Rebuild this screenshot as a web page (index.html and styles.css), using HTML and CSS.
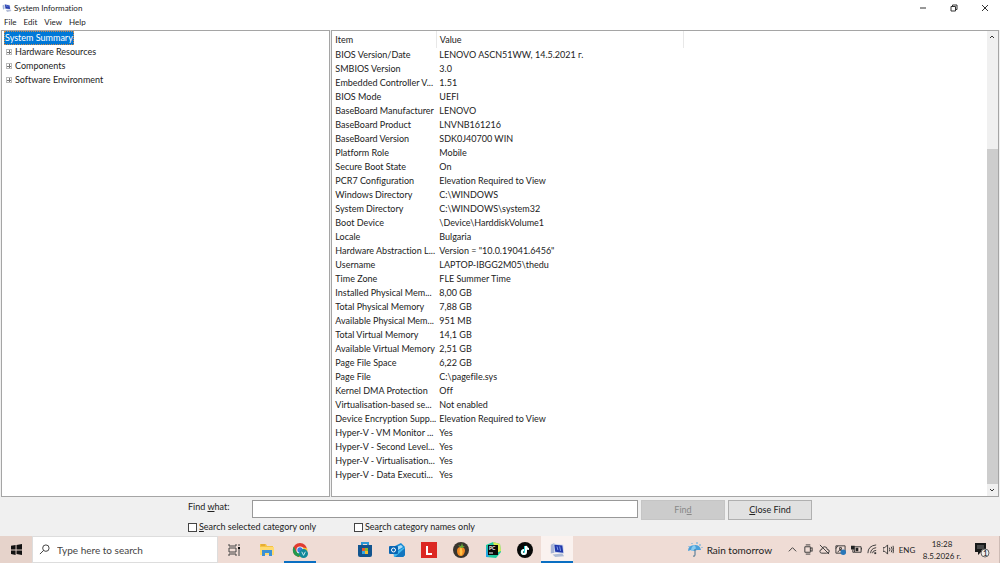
FILE: index.html
```html
<!DOCTYPE html>
<html lang="en">
<head>
  <meta charset="UTF-8">
  <meta name="viewport" content="width=device-width, initial-scale=1">
  <title>System Information</title>
  <link rel="stylesheet" href="styles.css">
</head>
<body>
  <header class="titlebar">
    <svg class="app-icon" viewBox="0 0 20 20" aria-hidden="true">
      <path d="M1 5l4-2v9l-3 1z" fill="#9fb3d6"/>
      <path d="M5 2l11 2 1 9-11-1z" fill="#d5dcef"/>
      <path d="M6 3l9 2 1 7-9-1z" fill="#2036a8"/>
      <path d="M8 14l9-1 2 3-9 2z" fill="#b3bdd8"/>
      <path d="M9 4l1 4M12 5v4" stroke="#8fb0ff"/>
    </svg>
    <h1>System Information</h1>
    <div class="window-buttons">
      <button type="button" aria-label="Minimize"><svg viewBox="0 0 10 10"><path d="M2 5h6"/></svg></button>
      <button type="button" aria-label="Restore"><svg viewBox="0 0 10 10"><path d="M2 3.500h4.500v4.500h-4.500zM3.500 3.500v-1.500h4.500v4.500h-1.500"/></svg></button>
      <button type="button" aria-label="Close"><svg viewBox="0 0 10 10"><path d="M2 2l6 6M8 2l-6 6"/></svg></button>
    </div>
  </header>

  <nav class="menubar">
    <button type="button">File</button>
    <button type="button">Edit</button>
    <button type="button">View</button>
    <button type="button">Help</button>
  </nav>

  <main class="panes">
    <section class="tree-pane">
      <ul class="tree">
        <li><a href="#summary" class="selected">System Summary</a></li>
        <li class="branch"><button type="button" class="expander" aria-label="Expand Hardware Resources"></button><a href="#hardware">Hardware Resources</a></li>
        <li class="branch"><button type="button" class="expander" aria-label="Expand Components"></button><a href="#components">Components</a></li>
        <li class="branch"><button type="button" class="expander" aria-label="Expand Software Environment"></button><a href="#software">Software Environment</a></li>
      </ul>
    </section>

    <section class="detail-pane" id="summary">
      <div class="table-area">
        <table class="details">
          <thead>
            <tr><th class="col-item">Item</th><th class="col-value">Value</th><th class="col-rest"></th></tr>
          </thead>
          <tbody>
            <tr><td>BIOS Version/Date</td><td>LENOVO ASCN51WW, 14.5.2021 г.</td></tr>
            <tr><td>SMBIOS Version</td><td>3.0</td></tr>
            <tr><td>Embedded Controller V...</td><td>1.51</td></tr>
            <tr><td>BIOS Mode</td><td>UEFI</td></tr>
            <tr><td>BaseBoard Manufacturer</td><td>LENOVO</td></tr>
            <tr><td>BaseBoard Product</td><td>LNVNB161216</td></tr>
            <tr><td>BaseBoard Version</td><td>SDK0J40700 WIN</td></tr>
            <tr><td>Platform Role</td><td>Mobile</td></tr>
            <tr><td>Secure Boot State</td><td>On</td></tr>
            <tr><td>PCR7 Configuration</td><td>Elevation Required to View</td></tr>
            <tr><td>Windows Directory</td><td>C:\WINDOWS</td></tr>
            <tr><td>System Directory</td><td>C:\WINDOWS\system32</td></tr>
            <tr><td>Boot Device</td><td>\Device\HarddiskVolume1</td></tr>
            <tr><td>Locale</td><td>Bulgaria</td></tr>
            <tr><td>Hardware Abstraction L...</td><td>Version = "10.0.19041.6456"</td></tr>
            <tr><td>Username</td><td>LAPTOP-IBGG2M05\thedu</td></tr>
            <tr><td>Time Zone</td><td>FLE Summer Time</td></tr>
            <tr><td>Installed Physical Mem...</td><td>8,00 GB</td></tr>
            <tr><td>Total Physical Memory</td><td>7,88 GB</td></tr>
            <tr><td>Available Physical Mem...</td><td>951 MB</td></tr>
            <tr><td>Total Virtual Memory</td><td>14,1 GB</td></tr>
            <tr><td>Available Virtual Memory</td><td>2,51 GB</td></tr>
            <tr><td>Page File Space</td><td>6,22 GB</td></tr>
            <tr><td>Page File</td><td>C:\pagefile.sys</td></tr>
            <tr><td>Kernel DMA Protection</td><td>Off</td></tr>
            <tr><td>Virtualisation-based se...</td><td>Not enabled</td></tr>
            <tr><td>Device Encryption Supp...</td><td>Elevation Required to View</td></tr>
            <tr><td>Hyper-V - VM Monitor ...</td><td>Yes</td></tr>
            <tr><td>Hyper-V - Second Level...</td><td>Yes</td></tr>
            <tr><td>Hyper-V - Virtualisation...</td><td>Yes</td></tr>
            <tr><td>Hyper-V - Data Executi...</td><td>Yes</td></tr>
          </tbody>
        </table>
      </div>
      <div class="scrollbar">
        <button type="button" aria-label="Scroll up"><svg viewBox="0 0 10 10"><path d="M3 6l2-2 2 2"/></svg></button>
        <div class="track"><div class="thumb"></div></div>
        <button type="button" aria-label="Scroll down"><svg viewBox="0 0 10 10"><path d="M3 4l2 2 2-2"/></svg></button>
      </div>
    </section>
  </main>

  <form class="findbar">
    <div class="find-row">
      <label for="find">Find <u>w</u>hat:</label>
      <input type="text" id="find">
      <button type="button" disabled>Fin<u>d</u></button>
      <button type="button"><u>C</u>lose Find</button>
    </div>
    <div class="check-row">
      <label><input type="checkbox"><span><u>S</u>earch selected category only</span></label>
      <label><input type="checkbox"><span>Sea<u>r</u>ch category names only</span></label>
    </div>
  </form>

  <footer class="taskbar">
    <button type="button" class="start" aria-label="Start">
      <svg viewBox="0 0 12 12"><path d="M0 2l5-1v5H0zM6 1l6-1v6H6zM0 7h5v5l-5-1zM6 7h6v5l-6-1z" fill="#111"/></svg>
    </button>
    <label class="search">
      <svg viewBox="0 0 12 12"><circle cx="7.500" cy="4.500" r="3.500"/><path d="M5 7l-4 4"/></svg>
      <input type="text" placeholder="Type here to search" aria-label="Type here to search">
    </label>

    <div class="apps pinned">
      <button type="button" aria-label="Task view">
        <svg viewBox="0 0 16 16" fill="none" stroke="#444"><path d="M3 2v2h7v-2M3 14v-2h7v2M3 6h7v4H3zM13 2v2M13 7v7"/><path d="M12 6h2" stroke="#111" stroke-width="2"/></svg>
      </button>
      <button type="button" aria-label="File Explorer">
        <svg viewBox="0 0 16 16"><path d="M1 2h6l1 2h6v9H1z" fill="#f5c343"/><path d="M1 5h14v8H1z" fill="#ffda70"/><path d="M3 8h10v6h-3v-3H6v3H3z" fill="#3c91d4"/><path d="M2 3h4" stroke="#d6962a"/></svg>
      </button>
      <button type="button" class="running" aria-label="Google Chrome">
        <svg viewBox="0 0 18 18"><circle cx="9" cy="9" r="8" fill="#e13b30"/><path d="M2 5a8 8 0 0 0 6 12l4-7-7 1z" fill="#23994e"/><path d="M17 7a8 8 0 0 1-9 10l5-8-2-3z" fill="#f5c530"/><circle cx="9" cy="9" r="4" fill="#fff"/><circle cx="9" cy="9" r="3" fill="#3b7de0"/><circle cx="13" cy="13" r="5" fill="#10899a"/><path d="M11 11l2 4 2-4" fill="none" stroke="#d7f3f5"/></svg>
      </button>
    </div>

    <div class="apps">
      <button type="button" aria-label="Microsoft Store">
        <svg viewBox="0 0 16 16"><path d="M5 4V1h6v3" fill="none" stroke="#2f9ad6" stroke-width="2"/><path d="M1 3h14v10q0 2-2 2H3q-2 0-2-2z" fill="#12558f"/><path d="M5 6h3v3H5z" fill="#e95c32"/><path d="M8 6h3v3H8z" fill="#86bd35"/><path d="M5 9h3v3H5z" fill="#35a7df"/><path d="M8 9h3v3H8z" fill="#f5bd2c"/></svg>
      </button>
      <button type="button" aria-label="Outlook">
        <svg viewBox="0 0 16 16"><path d="M4 5l8-4 4 4v8l-2 2H5z" fill="#1689d3"/><path d="M7 5l5-2 2 2-5 3z" fill="#a8dcf8"/><path d="M5 9l4 0 7-4v8l-2 2H5z" fill="#42b7ec"/><path d="M16 6L6 15h8l2-2z" fill="#1476bf"/><rect y="4" width="9" height="8" rx="1" fill="#0865b3"/><circle cx="4.500" cy="8" r="2" fill="none" stroke="#fff"/></svg>
      </button>
      <button type="button" aria-label="L">
        <svg viewBox="0 0 16 16"><path d="M0 0h16v16H0z" fill="#dc2823"/><path d="M6 4v8h5" fill="none" stroke="#fff" stroke-width="2"/></svg>
      </button>
      <button type="button" aria-label="FL Studio">
        <svg viewBox="0 0 16 16"><circle cx="8" cy="8" r="8" fill="#39352f"/><path d="M8 5q4 0 4 4-1 5-4 5-4 0-4-5 0-4 4-4z" fill="#f28a22"/><path d="M8 5q-3 4 0 9 3-4 0-9z" fill="#ffc347"/><path d="M8 6L5 3l3 1 1-3 1 3 2 0-3 2z" fill="#65a839"/></svg>
      </button>
      <button type="button" aria-label="PyCharm">
        <svg viewBox="0 0 16 16"><path d="M1 3l7-3 7 2 1 8-5 6-10-1z" fill="#20c9a0"/><path d="M8 0l7 2 1 7-5 2z" fill="#d9ed50"/><path d="M1 4l3 11-3 0z" fill="#21a7e4"/><path d="M3 3h10v10H3z" fill="#090909"/><text x="4" y="8" class="logo-text">PC</text><path d="M4 11h4" stroke="#fff"/></svg>
      </button>
      <button type="button" aria-label="TikTok">
        <svg viewBox="0 0 16 16"><circle cx="8" cy="8" r="8" fill="#080808"/><g fill="none" stroke-width="2"><path d="M8 4v6q0 2-2 2-2-1-1-3l2-1M8 4q1 3 3 3" stroke="#25dfe3"/><path d="M9 4v6q0 2-2 2-2 0-2-2 0-2 2-2M9 4q1 3 3 3" stroke="#fff"/></g></svg>
      </button>
      <button type="button" class="running active" aria-label="System Information">
        <svg viewBox="0 0 18 18"><path d="M2 3l4-2v11l-4 1z" fill="#a8b4d4"/><path d="M5 2l11 1 1 10-11-1z" fill="#cbd5ed"/><path d="M6 3l9 1 1 8-9-1z" fill="#2138aa"/><path d="M9 5l1 4M12 5l1 5" stroke="#87a8f3"/><path d="M4 14l11-1 2 3-10 1z" fill="#aebbd5"/></svg>
      </button>
    </div>

    <div class="tray">
      <button type="button" class="weather">
        <svg viewBox="0 0 16 16"><path d="M1 9Q1 3 8 3q5 0 6 5l-4 0-3 1-3-1z" fill="#4a9fda"/><path d="M7 3Q4 5 4 9l4-1q2-3-1-5z" fill="#8acbf0"/><path d="M8 7v6q0 2-2 1" fill="none" stroke="#47718f"/><path d="M5 1v1M10 0v2M13 2v2M15 5v1M2 4v1" stroke="#5ca9de"/></svg>
        <span>Rain tomorrow</span>
      </button>
      <div class="tray-icons">
        <button type="button" aria-label="Show hidden icons"><svg viewBox="0 0 12 12"><path d="M2 8l4-4 4 4"/></svg></button>
        <button type="button" aria-label="Meet Now"><svg viewBox="0 0 12 12"><path d="M3 1h5M2 3h6v6H2zM8 5l2-1v4L8 7M3 11h5"/></svg></button>
        <button type="button" aria-label="OneDrive"><svg viewBox="0 0 12 12"><path d="M3 10Q1 10 1 8t2-2q0-3 3-3t3 3q3 0 2 3-1 1-3 1zM1 1l10 10"/></svg></button>
        <button type="button" aria-label="Security"><svg viewBox="0 0 12 12"><path d="M1 2h10v8H1zM1 5l2-3M5 4h2v2H5zM3 9q2-4 5-1"/><circle cx="9" cy="9" r="3" fill="#2977b9" stroke="none"/></svg></button>
        <button type="button" aria-label="Battery"><svg viewBox="0 0 12 12"><path d="M3 3h8v6H4zM11 5h1v2"/><path d="M0 2h4v4H0zM5 4h3v4H5z" fill="#222" stroke="none"/><path d="M2 6v3h2"/></svg></button>
        <button type="button" aria-label="Network"><svg viewBox="0 0 12 12"><path d="M1 10Q1 2 10 1M4 10q0-5 6-6M6 10q0-3 4-3"/><path d="M8 9h2v2H8z" fill="#333" stroke="none"/></svg></button>
        <button type="button" aria-label="Volume"><svg viewBox="0 0 12 12"><path d="M0 4h2l3-3v10L2 8H0zM7 4q1 2 0 4M9 3q2 3 0 6M11 2q1 4 0 8"/></svg></button>
      </div>
      <button type="button" class="language">ENG</button>
      <button type="button" class="clock"><span>18:28</span><span>8.5.2026 г.</span></button>
      <button type="button" class="notifications" aria-label="1 new notification">
        <svg viewBox="0 0 16 16"><path d="M1 1h11v9H7l-3 3v-3H1z" fill="#181818"/><path d="M3 4h7M3 6h7" stroke="#777"/><circle cx="11" cy="11" r="4" fill="#eee" stroke="#666"/><text x="9" y="14" class="badge-text">1</text></svg>
      </button>
    </div>
  </footer>
</body>
</html>
```

FILE: styles.css
```css
* {
  box-sizing: border-box;
}

body {
  margin: 0;
  height: 100vh;
  display: flex;
  flex-direction: column;
  background: #f0f0f0;
  color: #222;
  font-family: Lato, "Noto Sans", sans-serif;
  font-size: 9px;
  font-variant-ligatures: none;
  line-height: 14px;
  overflow: hidden;
}

button, input {
  font: inherit;
  color: inherit;
}

button {
  padding: 0;
  border: 0;
  background: none;
}

a {
  color: inherit;
  text-decoration: none;
}

svg {
  display: block;
  flex: none;
}

/* Title and menu */
.titlebar {
  display: flex;
  align-items: center;
  height: 15px;
  padding-left: 2px;
  background: #fff;
}

.app-icon {
  width: 10px;
  height: 10px;
}

.titlebar h1 {
  flex: 1;
  margin: 0 0 0 2px;
  font-size: 8px;
  font-weight: 400;
}

.window-buttons {
  display: flex;
}

.window-buttons button {
  display: grid;
  place-items: center;
  width: 31px;
}

.window-buttons svg {
  width: 10px;
  height: 10px;
}

.window-buttons path, .scrollbar path {
  fill: none;
  stroke: #333;
}

.menubar {
  display: flex;
  align-items: flex-start;
  gap: 7px;
  height: 15px;
  padding-left: 4px;
  background: #fff;
  font-size: 8px;
}

/* Tree on the left, details on the right */
.panes {
  flex: 1;
  min-height: 0;
  display: grid;
  grid-template-columns: 33% 1fr;
  gap: 1px;
  padding: 0 1px;
}

.tree-pane, .detail-pane {
  border: 1px solid #a5a5a5;
  background: #fff;
  overflow: hidden;
}

.tree {
  margin: 0;
  padding: 0 2px;
  list-style: none;
}

.tree li {
  display: flex;
  align-items: center;
  height: 14px;
}

.tree .selected {
  padding: 0 1px;
  background: #0078d7;
  color: #fff;
  outline: 1px dotted #d08a4a;
  outline-offset: -1px;
}

.branch {
  padding-left: 2px;
  gap: 3px;
}

.expander {
  width: 6px;
  height: 6px;
  border: 1px solid #bbb;
  background: linear-gradient(#777, #777) center / 4px 1px no-repeat,
    linear-gradient(#777, #777) center / 1px 4px no-repeat;
}

.detail-pane {
  display: flex;
}

.table-area {
  flex: 1;
  min-width: 0;
}

.details {
  width: 100%;
  table-layout: fixed;
  border-collapse: collapse;
}

.details th, .details td {
  height: 14px;
  padding: 0 0 0 3px;
  font-weight: 400;
  text-align: left;
  white-space: nowrap;
}

.details th {
  height: 17px;
  border-right: 1px solid #e8e8e8;
}

.details .col-item {
  width: 104px;
}

.details .col-value {
  width: 247px;
}

.details .col-rest {
  border: 0;
}

.scrollbar {
  display: flex;
  flex-direction: column;
  width: 11px;
  background: #f0f0f0;
}

.scrollbar svg {
  width: 10px;
  height: 12px;
}

.track {
  flex: 1;
  display: flex;
  align-items: flex-end;
}

.thumb {
  width: 100%;
  height: 76%;
  background: #cdcdcd;
}

/* Find bar */
.findbar {
  width: 100%;
  max-width: 624px;
  margin: 0 auto;
  padding-top: 3px;
  height: 39px;
}

.find-row {
  display: grid;
  grid-template-columns: 61px 1fr 84px 84px;
  gap: 3px;
  height: 20px;
}

.find-row input {
  width: 100%;
  height: 18px;
  padding: 0 3px;
  border: 1px solid #999;
  background: #fff;
}

.find-row button {
  border: 1px solid #b0b0b0;
  background: #e1e1e1;
}

.find-row button:disabled {
  border-color: #c5c5c5;
  background: #ccc;
  color: #888;
}

.check-row {
  display: grid;
  grid-template-columns: 166px 1fr;
}

.check-row label {
  display: flex;
  align-items: center;
  gap: 2px;
}

.check-row input {
  appearance: none;
  width: 9px;
  height: 9px;
  margin: 0;
  border: 1px solid #444;
  background: #fff;
}

/* Taskbar */
.taskbar {
  display: flex;
  height: 27px;
  background: #efdcd5;
}

.start {
  display: grid;
  place-items: center;
  width: 32px;
  background: #e6d3cb;
}

.start svg {
  width: 11px;
  height: 11px;
}

.search {
  display: flex;
  align-items: center;
  gap: 7px;
  width: 186px;
  padding-left: 6px;
  border: 1px solid #ddd;
  background: #fff;
}

.search svg {
  width: 11px;
  height: 11px;
  fill: none;
  stroke: #333;
}

.search input {
  flex: 1;
  min-width: 0;
  padding: 0;
  border: 0;
  outline: 0;
  font-size: 10px;
}

.search input::placeholder {
  color: #444;
}

.apps {
  display: flex;
}

.pinned {
  gap: 1px;
}

.apps + .apps {
  margin-left: 33px;
}

.apps button {
  display: grid;
  place-items: center;
  width: 32px;
  border-bottom: 2px solid transparent;
  border-top: 2px solid transparent;
}

.apps svg {
  width: 16px;
  height: 16px;
}

.apps .running {
  border-bottom-color: #0a6fc2;
}

.apps .active {
  background: #faf2ef;
  border-bottom-color: #0a6fc2;
}

.logo-text {
  font-size: 5px;
  font-weight: 700;
  fill: #fff;
}

.tray {
  display: flex;
  align-items: center;
  margin-left: auto;
  padding-right: 2px;
  border-right: 1px solid #cdbbb5;
}

.weather {
  display: flex;
  align-items: center;
  gap: 4px;
  margin-right: 12px;
  font-size: 10px;
}

.weather svg {
  width: 16px;
  height: 16px;
}

.tray-icons {
  display: flex;
}

.tray-icons button {
  display: grid;
  place-items: center;
  width: 16px;
}

.tray-icons svg {
  width: 11px;
  height: 11px;
  fill: none;
  stroke: #333;
}

.language {
  width: 22px;
  font-size: 8px;
}

.clock {
  display: flex;
  flex-direction: column;
  align-items: center;
  width: 48px;
  font-size: 8px;
  line-height: 12px;
}

.notifications {
  display: grid;
  place-items: center;
  width: 31px;
}

.notifications svg {
  width: 16px;
  height: 16px;
}

.badge-text {
  font-size: 8px;
  fill: #111;
}
```
